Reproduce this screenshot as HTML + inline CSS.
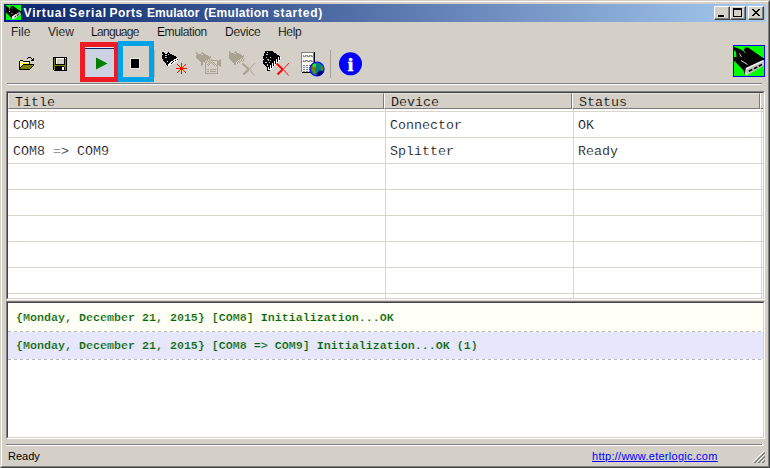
<!DOCTYPE html>
<html>
<head>
<meta charset="utf-8">
<title>Virtual Serial Ports Emulator</title>
<style>
*{box-sizing:border-box;margin:0;padding:0}
html,body{width:770px;height:468px;overflow:hidden;background:#d4d0c8}
body{position:relative;font-family:"Liberation Sans",sans-serif;font-size:12px;color:#000}
.a{position:absolute}
#win{left:0;top:0;width:770px;height:468px;background:#d4d0c8;
  border-top:1px solid #d4d0c8;border-left:1px solid #d4d0c8;border-right:1px solid #404040;border-bottom:1px solid #404040}
#win2{left:1px;top:1px;width:768px;height:466px;border-top:1px solid #fff;border-left:1px solid #fff;border-right:1px solid #808080;border-bottom:1px solid #808080}
#title{left:4px;top:4px;width:762px;height:18px;background:linear-gradient(to right,#0a246a 0%,#a6caf0 100%)}
#ttext{left:24px;top:6px;width:320px;height:14px;line-height:14px;font-weight:bold;font-size:12px;color:#fff;white-space:pre}
.tw{top:0;height:14px}
.cb{top:6px;width:16px;height:14px;background:#d4d0c8;border-top:1px solid #fff;border-left:1px solid #fff;border-right:1px solid #404040;border-bottom:1px solid #404040}
.cb:before{content:"";position:absolute;left:0;top:0;right:0;bottom:0;border-right:1px solid #808080;border-bottom:1px solid #808080}
.mi{top:25px;height:14px;line-height:14px;font-size:12px;white-space:pre;-webkit-text-stroke:0.15px #d4d0c8}
.hl{left:7px;width:755px;height:1px}
/* list */
.sunk{border-top:1px solid #808080;border-left:1px solid #808080;border-right:1px solid #fff;border-bottom:1px solid #fff;background:#fff}
.sunk>.in{position:absolute;left:0;top:0;right:0;bottom:0;border-top:1px solid #404040;border-left:1px solid #404040;border-right:1px solid #d4d0c8;border-bottom:1px solid #d4d0c8;overflow:hidden}
.hd{top:0;height:16px;background:#d4d0c8;border-top:1px solid #e8e5de;border-left:1px solid #fff;border-right:1px solid #7c7a76;border-bottom:1px solid #7c7a76}
.mono{font-family:"Liberation Mono",monospace;font-size:13.33px;white-space:pre;line-height:16px;height:16px;-webkit-text-stroke:0.2px #fff}
.mono.h{-webkit-text-stroke-color:#d4d0c8}
.gh{left:0;width:755px;height:1px;background:#d8d4cc}
.gv{top:16px;width:1px;height:190px;background:#d8d4cc}
.log{font-family:"Liberation Mono",monospace;font-weight:bold;font-size:11.67px;color:#006400;white-space:pre;line-height:14px;height:14px;left:8px}
.dash{left:0;width:755px;height:1px;background:repeating-linear-gradient(to right,#b8b8b8 0,#b8b8b8 3px,#fff 3px,#fff 6px)}
</style>
</head>
<body>
<div id="win" class="a"></div>
<div id="win2" class="a"></div>

<!-- title bar -->
<div id="title" class="a"></div>
<svg class="a" style="left:6px;top:5px" width="16" height="16" viewBox="0 0 16 16">
  <rect width="16" height="16" fill="#0000ff" shape-rendering="crispEdges"/>
  <rect width="15" height="15" fill="#00ff00" shape-rendering="crispEdges"/>
  <polygon points="0,1 2,2 3.5,3.5 5.5,1 7,1 15,6.5 15,8.5 7,14.5 5,12.5 0,7.5" fill="#000"/>
  <polygon points="6,11.5 14,6.5 15,9.5 7,14.5 6,13.5" fill="#a8a8a8"/><polygon points="6,11.5 10,9 11,12 7,14.5 6,13.5" fill="#f0f0f0"/>
  <path d="M3 3.5h1v1h-1zM5.5 2.5h1v1h-1zM3 6h1v1h-1zM5.5 8h1v1h-1z" fill="#c0c0c0"/>
  <path d="M8.5 12l1.5 -1M11 10.5l1.5 -1" stroke="#000" stroke-width="1"/>
</svg>
<div id="ttext" class="a"><span id="t1" class="a tw" style="left:-0.5px;letter-spacing:0.85px">Virtual</span> <span id="t2" class="a tw" style="left:45px;letter-spacing:0.9px">Serial</span> <span id="t3" class="a tw" style="left:85.5px;letter-spacing:0.5px">Ports</span> <span id="t4" class="a tw" style="left:123px;letter-spacing:0.05px">Emulator</span> <span id="t5" class="a tw" style="left:180px;letter-spacing:0.3px">(Emulation</span> <span id="t6" class="a tw" style="left:249px;letter-spacing:0.75px">started)</span></div>
<div class="a cb" style="left:714px"><div class="a" style="left:3px;top:8px;width:6px;height:2px;background:#000"></div></div>
<div class="a cb" style="left:730px"><div class="a" style="left:2px;top:1px;width:9px;height:9px;border:1px solid #000;border-top-width:2px"></div></div>
<div class="a cb" style="left:748px">
  <svg class="a" style="left:3px;top:2px" width="8" height="7" viewBox="0 0 8 7" shape-rendering="crispEdges"><path d="M0 0h2v1h-2zM6 0h2v1h-2zM1 1h2v1h-2zM5 1h2v1h-2zM2 2h4v1h-4zM3 3h2v1h-2zM2 4h4v1h-4zM1 5h2v1h-2zM5 5h2v1h-2zM0 6h2v1h-2zM6 6h2v1h-2z" fill="#000"/></svg>
</div>

<!-- menu -->
<div id="m1" class="a mi" style="left:11px">File</div>
<div id="m2" class="a mi" style="left:48px">View</div>
<div id="m3" class="a mi" style="left:91px;letter-spacing:-0.7px">Language</div>
<div id="m4" class="a mi" style="left:157px;letter-spacing:-0.4px">Emulation</div>
<div id="m5" class="a mi" style="left:225px;letter-spacing:-0.2px">Device</div>
<div id="m6" class="a mi" style="left:278px;letter-spacing:-0.3px">Help</div>

<!-- toolbar -->
<svg class="a" style="left:0;top:40px" width="770" height="50" viewBox="0 40 770 50">
<g shape-rendering="crispEdges">
<path fill="#000" d="M28 57h3v1h-3zM27 58h1v1h-1zM31 58h1v1h-1zM33 58h1v1h-1zM32 59h2v1h-2zM20 60h3v1h-3zM31 60h3v1h-3zM19 61h1v1h-1zM23 61h7v1h-7zM19 62h1v1h-1zM29 62h1v1h-1zM19 63h1v1h-1zM29 63h1v1h-1zM19 64h1v1h-1zM23 64h11v1h-11zM19 65h1v1h-1zM22 65h1v1h-1zM33 65h1v1h-1zM19 66h1v1h-1zM21 66h1v1h-1zM32 66h1v1h-1zM19 67h2v1h-2zM31 67h1v1h-1zM19 68h1v1h-1zM30 68h1v1h-1zM19 69h11v1h-11z"/><path fill="#ffff00" d="M20 61h1v1h-1zM22 61h1v1h-1zM21 62h1v1h-1zM23 62h1v1h-1zM25 62h1v1h-1zM27 62h1v1h-1zM20 63h1v1h-1zM22 63h1v1h-1zM24 63h1v1h-1zM26 63h1v1h-1zM28 63h1v1h-1zM21 64h1v1h-1zM20 65h1v1h-1z"/><path fill="#fff" d="M21 61h1v1h-1zM20 62h1v1h-1zM22 62h1v1h-1zM24 62h1v1h-1zM26 62h1v1h-1zM28 62h1v1h-1zM21 63h1v1h-1zM23 63h1v1h-1zM25 63h1v1h-1zM27 63h1v1h-1zM20 64h1v1h-1zM22 64h1v1h-1zM21 65h1v1h-1zM20 66h1v1h-1z"/><path fill="#808000" d="M23 65h10v1h-10zM22 66h10v1h-10zM21 67h10v1h-10zM20 68h10v1h-10z"/>
<path fill="#000" d="M53 57h14v1h-14zM53 58h1v1h-1zM55 58h1v1h-1zM64 58h1v1h-1zM66 58h1v1h-1zM53 59h1v1h-1zM55 59h1v1h-1zM64 59h1v1h-1zM66 59h1v1h-1zM53 60h1v1h-1zM55 60h1v1h-1zM64 60h1v1h-1zM66 60h1v1h-1zM53 61h1v1h-1zM55 61h1v1h-1zM64 61h1v1h-1zM66 61h1v1h-1zM53 62h1v1h-1zM55 62h1v1h-1zM64 62h1v1h-1zM66 62h1v1h-1zM53 63h1v1h-1zM55 63h1v1h-1zM64 63h1v1h-1zM66 63h1v1h-1zM53 64h1v1h-1zM55 64h10v1h-10zM66 64h1v1h-1zM53 65h1v1h-1zM66 65h1v1h-1zM53 66h1v1h-1zM55 66h9v1h-9zM66 66h1v1h-1zM53 67h1v1h-1zM55 67h7v1h-7zM64 67h1v1h-1zM66 67h1v1h-1zM53 68h1v1h-1zM55 68h7v1h-7zM64 68h1v1h-1zM66 68h1v1h-1zM53 69h1v1h-1zM55 69h7v1h-7zM64 69h1v1h-1zM66 69h1v1h-1zM54 70h13v1h-13z"/><path fill="#808000" d="M54 58h1v1h-1zM54 59h1v1h-1zM65 59h1v1h-1zM54 60h1v1h-1zM65 60h1v1h-1zM54 61h1v1h-1zM65 61h1v1h-1zM54 62h1v1h-1zM65 62h1v1h-1zM54 63h1v1h-1zM65 63h1v1h-1zM54 64h1v1h-1zM65 64h1v1h-1zM54 65h12v1h-12zM54 66h1v1h-1zM64 66h2v1h-2zM54 67h1v1h-1zM65 67h1v1h-1zM54 68h1v1h-1zM65 68h1v1h-1zM54 69h1v1h-1zM65 69h1v1h-1z"/><path fill="#fff" d="M56 58h8v1h-8zM65 58h1v1h-1zM56 59h1v1h-1zM56 60h1v1h-1zM56 61h1v1h-1zM56 62h1v1h-1zM56 63h1v1h-1zM62 67h2v1h-2zM62 68h2v1h-2zM62 69h2v1h-2z"/><path fill="#d4d0c8" d="M57 59h7v1h-7zM57 60h7v1h-7zM57 61h7v1h-7zM57 62h7v1h-7zM57 63h7v1h-7z"/>
<path fill="#ff0000" d="M181 63h1v1h-1zM177 64h1v1h-1zM181 64h1v1h-1zM185 64h1v1h-1zM178 65h1v1h-1zM181 65h1v1h-1zM184 65h1v1h-1zM179 66h1v1h-1zM181 66h1v1h-1zM183 66h1v1h-1zM180 67h3v1h-3zM176 68h11v1h-11zM180 69h3v1h-3zM179 70h1v1h-1zM181 70h1v1h-1zM183 70h1v1h-1zM178 71h1v1h-1zM181 71h1v1h-1zM184 71h1v1h-1zM177 72h1v1h-1zM181 72h1v1h-1zM185 72h1v1h-1zM181 73h1v1h-1z"/><path fill="#ffff00" d="M180 66h1v1h-1zM182 66h1v1h-1zM180 70h1v1h-1zM182 70h1v1h-1z"/>
<path fill="#000" d="M162 52h2v1h-2zM168 52h1v1h-1zM162 53h3v1h-3zM167 53h3v1h-3zM163 54h5v1h-5zM169 54h3v1h-3zM162 55h3v1h-3zM167 55h7v1h-7zM162 56h14v1h-14zM162 57h3v1h-3zM167 57h10v1h-10zM162 58h14v1h-14zM163 59h11v1h-11zM177 59h1v1h-1zM163 60h10v1h-10zM175 60h1v1h-1zM164 61h3v1h-3zM168 61h3v1h-3zM173 61h1v1h-1zM165 62h5v1h-5zM172 62h1v1h-1zM166 63h3v1h-3zM171 63h1v1h-1zM166 64h2v1h-2zM167 65h1v1h-1z"/><path fill="#c0c0c0" d="M168 54h1v1h-1zM165 55h2v1h-2zM165 57h2v1h-2z"/><path fill="#fff" d="M176 58h2v1h-2zM174 59h3v1h-3zM173 60h2v1h-2zM176 60h2v1h-2zM171 61h2v1h-2zM174 61h3v1h-3zM170 62h2v1h-2zM173 62h2v1h-2zM169 63h2v1h-2zM172 63h2v1h-2zM168 64h4v1h-4zM168 65h2v1h-2z"/><path fill="#ffff00" d="M167 61h1v1h-1z"/>
<path fill="#aaa391" d="M196 52h1v1h-1zM202 52h1v1h-1zM196 53h2v1h-2zM201 53h3v1h-3zM197 54h4v1h-4zM203 54h3v1h-3zM196 55h12v1h-12zM196 56h13v1h-13zM210 56h1v1h-1zM196 57h15v1h-15zM197 58h13v1h-13zM198 59h10v1h-10zM209 59h1v1h-1zM211 59h1v1h-1zM220 59h1v1h-1zM199 60h7v1h-7zM207 60h1v1h-1zM209 60h1v1h-1zM211 60h7v1h-7zM219 60h2v1h-2zM200 61h5v1h-5zM206 61h1v1h-1zM208 61h1v1h-1zM210 61h1v1h-1zM212 61h1v1h-1zM217 61h4v1h-4zM201 62h2v1h-2zM205 62h2v1h-2zM209 62h1v1h-1zM211 62h1v1h-1zM213 62h1v1h-1zM217 62h4v1h-4zM201 63h2v1h-2zM205 63h1v1h-1zM208 63h1v1h-1zM210 63h1v1h-1zM212 63h1v1h-1zM214 63h1v1h-1zM217 63h4v1h-4zM201 64h2v1h-2zM205 64h1v1h-1zM207 64h1v1h-1zM209 64h1v1h-1zM213 64h1v1h-1zM215 64h1v1h-1zM217 64h4v1h-4zM201 65h1v1h-1zM205 65h1v1h-1zM208 65h1v1h-1zM214 65h1v1h-1zM216 65h2v1h-2zM219 65h2v1h-2zM205 66h1v1h-1zM217 66h1v1h-1zM220 66h1v1h-1zM205 67h1v1h-1zM217 67h1v1h-1zM205 68h1v1h-1zM217 68h1v1h-1zM205 69h1v1h-1zM207 69h2v1h-2zM210 69h6v1h-6zM217 69h1v1h-1zM205 70h1v1h-1zM217 70h1v1h-1zM205 71h1v1h-1zM207 71h2v1h-2zM210 71h6v1h-6zM217 71h1v1h-1zM205 72h1v1h-1zM217 72h1v1h-1zM205 73h13v1h-13z"/>
<path fill="#aaa391" d="M229 51h1v1h-1zM235 51h1v1h-1zM229 52h2v1h-2zM234 52h3v1h-3zM229 53h5v1h-5zM236 53h3v1h-3zM229 54h12v1h-12zM229 55h13v1h-13zM243 55h1v1h-1zM229 56h15v1h-15zM229 57h14v1h-14zM229 58h12v1h-12zM242 58h1v1h-1zM244 58h1v1h-1zM230 59h10v1h-10zM241 59h1v1h-1zM243 59h1v1h-1zM231 60h7v1h-7zM239 60h1v1h-1zM241 60h1v1h-1zM243 60h1v1h-1zM232 61h5v1h-5zM238 61h1v1h-1zM240 61h1v1h-1zM242 61h1v1h-1zM233 62h3v1h-3zM237 62h1v1h-1zM239 62h1v1h-1zM234 63h2v1h-2zM237 63h1v1h-1zM234 64h2v1h-2z"/>
<path fill="#000" d="M265 51h8v1h-8zM265 52h2v1h-2zM268 52h6v1h-6zM264 53h12v1h-12zM264 54h2v1h-2zM268 54h9v1h-9zM264 55h15v1h-15zM263 56h17v1h-17zM263 57h3v1h-3zM267 57h3v1h-3zM271 57h7v1h-7zM279 57h1v1h-1zM263 58h15v1h-15zM279 58h1v1h-1zM264 59h3v1h-3zM269 59h7v1h-7zM277 59h1v1h-1zM279 59h1v1h-1zM263 60h5v1h-5zM269 60h1v1h-1zM271 60h5v1h-5zM277 60h1v1h-1zM263 61h11v1h-11zM275 61h1v1h-1zM277 61h1v1h-1zM263 62h2v1h-2zM267 62h2v1h-2zM270 62h4v1h-4zM275 62h1v1h-1zM263 63h9v1h-9zM273 63h1v1h-1zM275 63h1v1h-1zM264 64h3v1h-3zM268 64h4v1h-4zM273 64h1v1h-1zM265 65h2v1h-2zM268 65h2v1h-2zM271 65h1v1h-1zM273 65h1v1h-1zM266 66h4v1h-4zM271 66h1v1h-1zM267 67h1v1h-1zM269 67h1v1h-1zM271 67h1v1h-1zM267 68h1v1h-1zM269 68h1v1h-1zM267 69h1v1h-1zM267 70h3v1h-3z"/><path fill="#c0c0c0" d="M267 52h1v1h-1zM266 54h2v1h-2zM266 57h1v1h-1zM267 59h2v1h-2zM268 60h1v1h-1zM270 60h1v1h-1zM265 62h2v1h-2zM269 62h1v1h-1zM267 64h1v1h-1z"/><path fill="#ffff00" d="M270 57h1v1h-1zM267 65h1v1h-1z"/><path fill="#fff" d="M278 57h1v1h-1zM280 57h1v1h-1zM278 58h1v1h-1zM280 58h1v1h-1zM276 59h1v1h-1zM278 59h1v1h-1zM276 60h1v1h-1zM278 60h2v1h-2zM274 61h1v1h-1zM276 61h1v1h-1zM278 61h1v1h-1zM274 62h1v1h-1zM276 62h2v1h-2zM272 63h1v1h-1zM274 63h1v1h-1zM276 63h1v1h-1zM272 64h1v1h-1zM274 64h2v1h-2zM270 65h1v1h-1zM272 65h1v1h-1zM274 65h1v1h-1zM270 66h1v1h-1zM272 66h2v1h-2zM268 67h1v1h-1zM270 67h1v1h-1zM272 67h1v1h-1zM268 68h1v1h-1zM270 68h2v1h-2zM268 69h3v1h-3z"/>
<rect x="80" y="42" width="38" height="40" fill="#ed1c24"/>
<rect x="85" y="47" width="29" height="30" fill="#cdd2e3"/>
<rect x="85" y="47" width="29" height="1" fill="#e4e8f0"/><rect x="85" y="48" width="29" height="1" fill="#0a246a"/>
<rect x="118" y="41" width="36" height="41" fill="#00a2e8"/>
<rect x="123" y="46" width="26" height="31" fill="#d4d0c8"/>
<rect x="154" y="50" width="1" height="27" fill="#b4b0a8"/>
<rect x="130" y="58" width="10" height="11" fill="#eeeae2"/>
<rect x="131" y="59" width="8" height="9" fill="#000"/>
<rect x="330" y="50" width="1" height="28" fill="#a5a195"/>
</g>
<polygon points="96,57.5 96,69.5 107.5,63.5" fill="#008000"/>
<g stroke="#aaa391" fill="none"><path stroke-width="2" d="M242.5 63.5L249 69.5"/><path stroke-width="2.4" d="M248.5 69.5L243.5 74.5"/><path stroke-width="1" d="M249 69.5L255 63M249.5 69.5L254.5 75.5"/></g>
<g stroke="#ff0000" fill="none"><path stroke-width="1.8" d="M276.5 63.5L283 69.5"/><path stroke-width="1.9" d="M282.5 69.5L277.5 74.5"/><path stroke-width="0.9" d="M283 69.5L289 63M283.5 69.5L288.5 75.5"/></g>
<g shape-rendering="crispEdges">
<rect x="301" y="52" width="13" height="20" fill="#f0f0f0"/>
<rect x="301" y="52" width="1" height="20" fill="#808080"/><rect x="301" y="52" width="13" height="1" fill="#808080"/>
<rect x="314" y="52" width="1" height="21" fill="#000"/><rect x="302" y="72" width="13" height="1" fill="#000"/><rect x="313" y="53" width="1" height="19" fill="#808080"/>
<path fill="#fff" d="M302 53h11v2h-11zM302 58h11v2h-11zM302 63h11v2h-11z"/>
<path fill="#909090" d="M303 55h10v2h-10zM303 60h10v2h-10z"/>
<path fill="#e0e0e0" d="M304 55h1v1h-1zM306 56h1v1h-1zM308 55h1v1h-1zM310 56h1v1h-1zM312 55h1v1h-1zM304 60h1v1h-1zM306 61h1v1h-1zM308 60h1v1h-1zM310 61h1v1h-1zM312 60h1v1h-1z"/>
<path fill="#808080" d="M303 65h9v1h-9zM303 67h9v1h-9zM303 69h9v1h-9zM303 71h9v1h-9z"/>
<path fill="#f0f0f0" d="M305 65h1v7h-1zM308 65h1v7h-1zM311 65h1v7h-1z"/>
</g>
<circle cx="317" cy="69" r="7" fill="#008080" stroke="#0000ff" stroke-width="1.2"/>
<path fill="#000080" d="M317 76a7 7 0 0 0 6.5 -4.5l-4 -1l-3 3z"/>
<path fill="#808000" d="M312 65l3 -2 1 3 -1 3 1 4 -2 1 -2 -4zM321 66l2 1 0 3 -2 0z"/>
<rect x="313" y="64" width="3" height="3" fill="#00ff00"/>
<circle cx="350.5" cy="63.8" r="11.5" fill="#0000ff"/>
<text x="350.5" y="71" text-anchor="middle" font-family="Liberation Serif, serif" font-weight="bold" font-size="19.5" fill="#fff" stroke="#fff" stroke-width="0.7">i</text>
<rect x="733.5" y="45.5" width="31" height="31" fill="#00ff00" stroke="#0000ff" stroke-width="1" shape-rendering="crispEdges"/>
<polygon fill="#000" points="734,47 737,48 741,49.5 743.5,51.5 745,47.5 748,47.5 764,58.5 764,60.5 746,68.5 745,75 743.5,70.5 734,60.5 734,57 736.5,57 736,52 734,50"/>
<polygon fill="#c4c4c4" points="745.8,68.2 763.5,60 764,65.5 747,75.3 744.8,73.5"/>
<path stroke="#fff" stroke-width="1.2" fill="none" d="M746 68.6L763.5 60.5M745.6 73.6l1.6 1.2"/>
<path fill="#000" d="M748.5 70.5l3.5 -1.8 .7 1.6 -3.5 1.8zM753.5 68l3.5 -1.8 .7 1.6 -3.5 1.8zM758.5 65.3l3.2 -1.6 .6 1.5 -3.2 1.7z"/>
<path stroke="#d8d8d8" stroke-width="1" fill="none" d="M739.5 53.5l2 3.5M741 60.5l6.5 4M744.5 51.5l.6 1.2"/>
</svg>
<div class="a hl" style="top:83px;background:#808080"></div>
<div class="a hl" style="top:84px;background:#fff"></div>

<!-- list view -->
<div id="list" class="a sunk" style="left:6px;top:91px;width:759px;height:209px"><div class="in">
  <div class="a hd" style="left:0;width:376px;border-left-color:#ece9e2"></div>
  <div class="a hd" style="left:376px;width:188px"></div>
  <div class="a hd" style="left:564px;width:188px"></div>
  <div class="a hd" style="left:752px;width:8px"></div>
  <div id="h1" class="a mono h" style="left:7px;top:2px">Title</div>
  <div id="h2" class="a mono h" style="left:383px;top:2px">Device</div>
  <div id="h3" class="a mono h" style="left:571px;top:2px">Status</div>
  <div class="a gh" style="top:18px"></div>
  <div class="a gh" style="top:44px"></div>
  <div class="a gh" style="top:70px"></div>
  <div class="a gh" style="top:96px"></div>
  <div class="a gh" style="top:122px"></div>
  <div class="a gh" style="top:148px"></div>
  <div class="a gh" style="top:174px"></div>
  <div class="a gh" style="top:200px"></div>
  <div class="a gv" style="left:377px"></div>
  <div class="a gv" style="left:565px"></div>
  <div class="a gv" style="left:753px"></div>
  <div id="r1a" class="a mono" style="left:5px;top:25px">COM8</div>
  <div id="r1b" class="a mono" style="left:382px;top:25px">Connector</div>
  <div id="r1c" class="a mono" style="left:570px;top:25px">OK</div>
  <div id="r2a" class="a mono" style="left:5px;top:51px">COM8 =&gt; COM9</div>
  <div id="r2b" class="a mono" style="left:382px;top:51px">Splitter</div>
  <div id="r2c" class="a mono" style="left:570px;top:51px">Ready</div>
</div></div>

<!-- log -->
<div id="logbox" class="a sunk" style="left:6px;top:301px;width:759px;height:138px"><div class="in">
  <div class="a" style="left:0;top:1px;width:755px;height:27px;background:#fffff5"></div>
  <div class="a dash" style="top:28px"></div>
  <div class="a" style="left:0;top:29px;width:755px;height:27px;background:#e6e6fd"></div>
  <div class="a dash" style="top:56px"></div>
  <div id="l1" class="a log" style="top:8px;-webkit-text-stroke:0.2px #fffff5">{Monday, December 21, 2015} [COM8] Initialization...OK</div>
  <div id="l2" class="a log" style="top:36px;-webkit-text-stroke:0.2px #e6e6fd">{Monday, December 21, 2015} [COM8 =&gt; COM9] Initialization...OK (1)</div>
</div></div>

<!-- status bar -->
<div class="a" style="left:6px;top:444px;width:756px;height:1px;background:#808080"></div>
<div class="a" style="left:6px;top:445px;width:758px;height:1px;background:#fff"></div>
<div class="a" style="left:762px;top:444px;width:1px;height:2px;background:#fff"></div>
<div id="st" class="a" style="left:8px;top:449px;font-size:11px;line-height:14px;height:14px;white-space:pre">Ready</div>
<div id="lnk" class="a" style="left:592px;top:449px;font-size:11px;line-height:14px;height:14px;white-space:pre;color:#0000ff;text-decoration:underline;letter-spacing:0.27px">http://www.eterlogic.com</div>
<svg class="a" style="left:753px;top:451px" width="12" height="12" viewBox="0 0 12 12" shape-rendering="crispEdges">
  <path d="M11 0L0 11M11 4L4 11M11 8L8 11" stroke="#fff" stroke-width="1" fill="none" shape-rendering="auto"/>
  <path d="M12 1L1 12M12 2L2 12M12 5L5 12M12 6L6 12M12 9L9 12M12 10L10 12" stroke="#808080" stroke-width="1" fill="none" shape-rendering="auto"/>
</svg>
</body>
</html>
